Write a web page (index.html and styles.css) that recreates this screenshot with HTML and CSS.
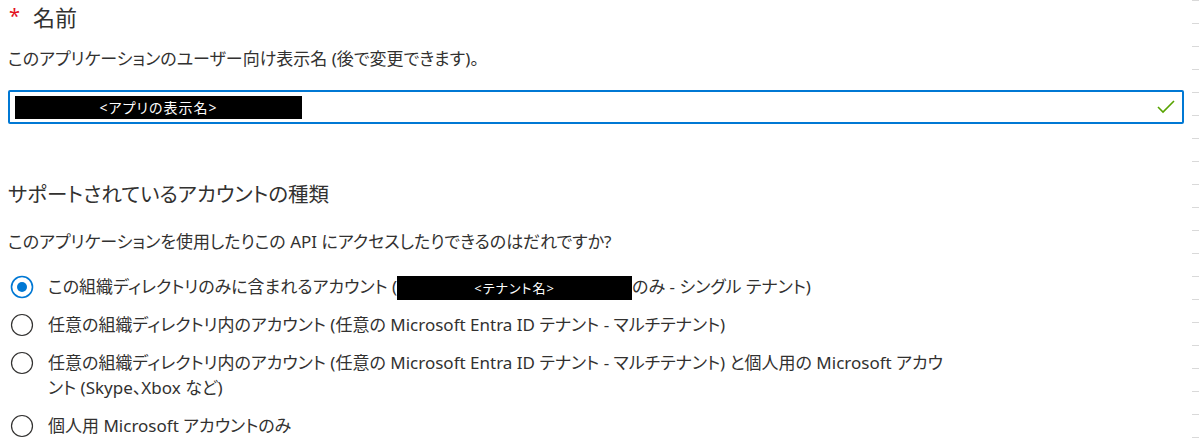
FILE: index.html
```html
<!DOCTYPE html>
<html lang="ja">
<head>
<meta charset="utf-8">
<link rel="stylesheet" href="styles.css">
</head>
<body>
<div class="page">
  <div class="field-label"><span class="req">*</span><span class="label-text">名前</span></div>
  <p class="desc">このアプリケーションのユーザー向け表示名 (後で変更できます)。</p>
  <div class="input">
    <span class="redact redact-app">&lt;アプリの表示名&gt;</span>
    <svg class="check" width="18" height="14" viewBox="0 0 18 14"><polyline points="1,7 6,12 17,1" fill="none" stroke="#57a300" stroke-width="1.6"/></svg>
  </div>

  <h2 class="section">サポートされているアカウントの種類</h2>
  <p class="question">このアプリケーションを使用したりこの API にアクセスしたりできるのはだれですか?</p>

  <div class="options">
    <div class="option">
      <span class="radio checked"><svg width="24" height="24" viewBox="0 0 24 24"><circle cx="12" cy="12" r="10.5" fill="#fff" stroke="#0078d4" stroke-width="1.6"/><circle cx="12" cy="12" r="5" fill="#0078d4"/></svg></span>
      <span class="opt-text">この組織ディレクトリのみに含まれるアカウント (<span class="redact redact-tenant">&lt;テナント名&gt;</span>のみ - シングル テナント)</span>
    </div>
    <div class="option">
      <span class="radio"><svg width="24" height="24" viewBox="0 0 24 24"><circle cx="12" cy="12" r="10.5" fill="#fff" stroke="#323130" stroke-width="1.2"/></svg></span>
      <span class="opt-text">任意の組織ディレクトリ内のアカウント (任意の Microsoft Entra ID テナント - マルチテナント)</span>
    </div>
    <div class="option">
      <span class="radio"><svg width="24" height="24" viewBox="0 0 24 24"><circle cx="12" cy="12" r="10.5" fill="#fff" stroke="#323130" stroke-width="1.2"/></svg></span>
      <span class="opt-text wrap">任意の組織ディレクトリ内のアカウント (任意の Microsoft Entra ID テナント - マルチテナント) と個人用の Microsoft アカウント (Skype、Xbox など)</span>
    </div>
    <div class="option">
      <span class="radio"><svg width="24" height="24" viewBox="0 0 24 24"><circle cx="12" cy="12" r="10.5" fill="#fff" stroke="#323130" stroke-width="1.2"/></svg></span>
      <span class="opt-text">個人用 Microsoft アカウントのみ</span>
    </div>
  </div>
</div>
<div class="ticks"></div>
</body>
</html>
```
FILE: styles.css
```css
html, body {
  margin: 0;
  padding: 0;
  background: #ffffff;
}
body {
  font-family: "Noto Sans", "Noto Sans CJK JP", sans-serif;
  color: #323130;
  font-feature-settings: "palt";
  overflow: hidden;
}
.page {
  padding: 0 15px 0 8px;
  width: 1176px;
}
.field-label {
  display: flex;
  align-items: center;
  height: 34px;
  font-size: 22px;
  line-height: 34px;
}
.req {
  color: #e3101d;
  font-size: 20px;
  width: 24px;
  padding-left: 1px;
  position: relative;
  top: -1px;
}
.desc {
  margin: 13px 0 0;
  font-size: 17px;
  line-height: 24px;
}
.input {
  margin-top: 19px;
  height: 34px;
  box-sizing: border-box;
  border: 2px solid #0078d4;
  border-radius: 2px;
  display: flex;
  align-items: center;
  justify-content: space-between;
  padding: 0 6px 0 5px;
}
.redact {
  background: #000;
  color: #fff;
  font-size: 14px;
  text-align: center;
}
.redact-app {
  display: inline-block;
  width: 287px;
  height: 23px;
  line-height: 23px;
  letter-spacing: 1px;
}
.check {
  margin-right: 1px;
}
.section {
  margin: 56px 0 0;
  font-size: 20.5px;
  font-weight: normal;
  line-height: 28px;
}
.question {
  margin: 22px 0 0;
  font-size: 17px;
  line-height: 24px;
}
.options {
  margin-top: 20px;
  display: flex;
  flex-direction: column;
  gap: 13px;
}
.option {
  display: flex;
  align-items: flex-start;
  font-size: 17px;
  line-height: 25px;
}
.radio {
  width: 24px;
  height: 25px;
  margin-left: 2px;
  margin-right: 14px;
  display: flex;
  align-items: center;
  flex: none;
}
.radio svg {
  display: block;
}
.opt-text {
  max-width: 900px;
}
.redact-tenant {
  display: inline-block;
  width: 235px;
  height: 24px;
  line-height: 24px;
  vertical-align: top;
  position: relative;
  top: 2px;
  font-size: 13px;
  letter-spacing: 1px;
}
.ticks {
  position: absolute;
  top: 0;
  right: 0;
  width: 7px;
  height: 448px;
  background: repeating-linear-gradient(to bottom, #d9d9d9 0, #d9d9d9 1px, transparent 1px, transparent 23px);
}
```
